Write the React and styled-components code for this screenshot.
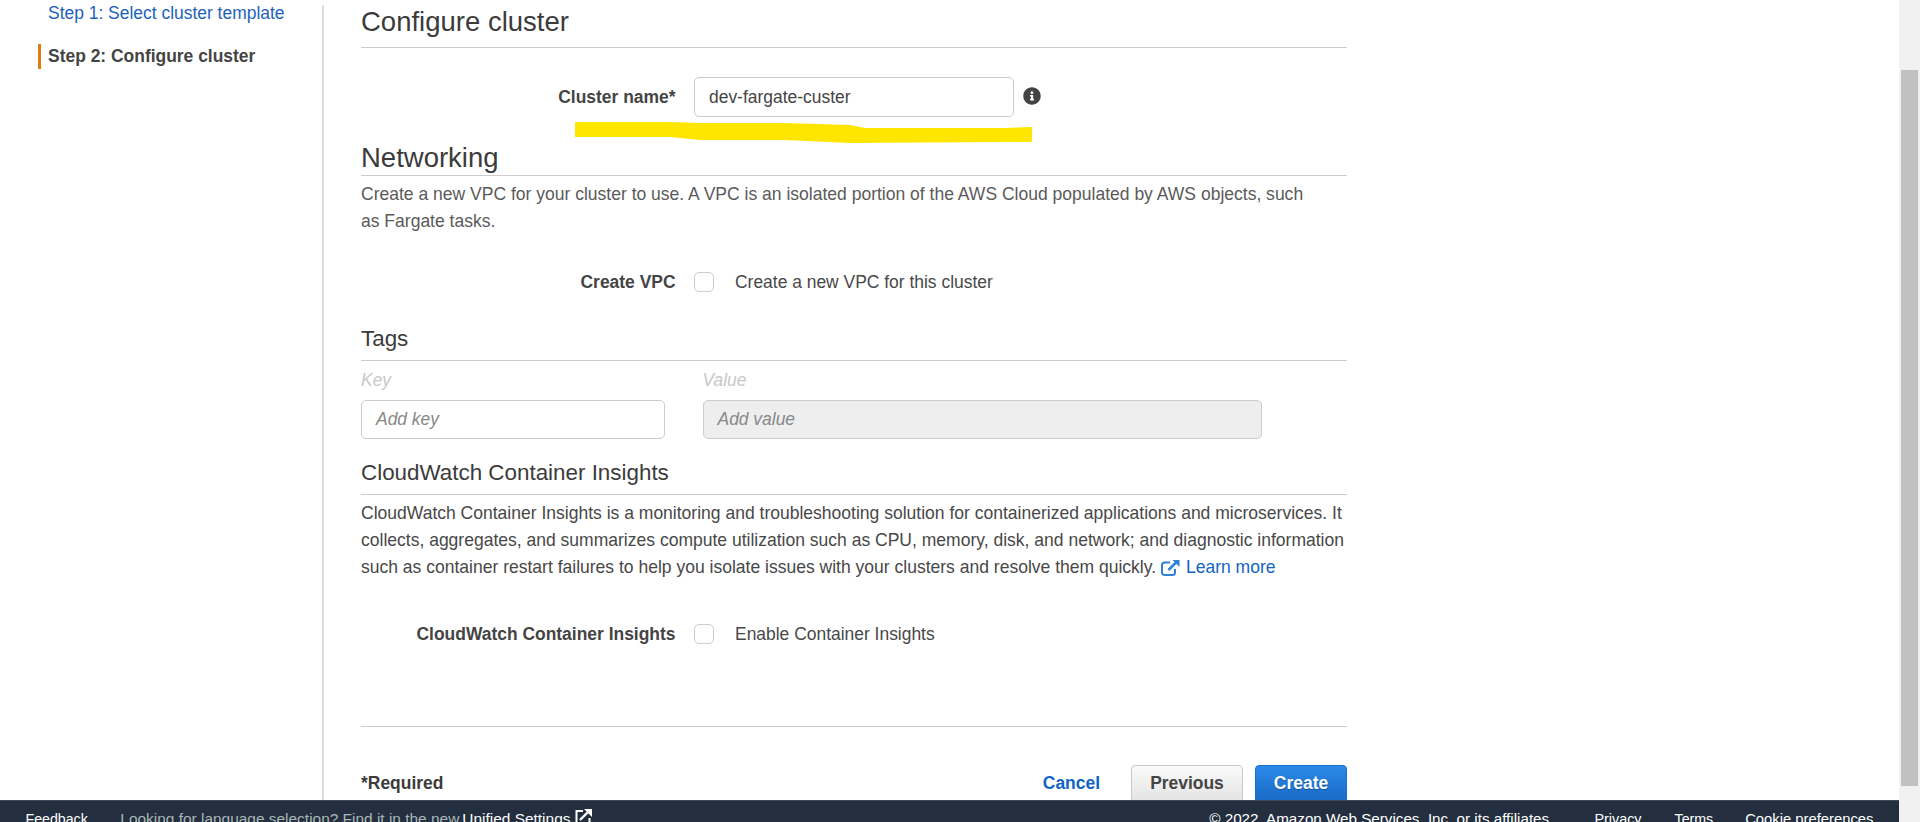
import React from "react";
import styled, { createGlobalStyle } from "styled-components";
import { FaInfoCircle } from "react-icons/fa";

const BODY = 17.45;

const Global = createGlobalStyle`
  html, body { margin: 0; padding: 0; height: 100%; overflow: hidden; background: #fff; }
  body { font-family: "Liberation Sans", Arial, sans-serif; color: #444; }
  * { box-sizing: border-box; }
`;

const Shell = styled.div`display: flex; width: 1920px; height: 822px; overflow: hidden;`;
const Page = styled.div`display: flex; flex-direction: column; width: 1899px; height: 822px;`;
const Content = styled.div`display: flex; flex: 0 0 800px; height: 800px; padding-top: 5px; overflow: hidden;`;
const Sidebar = styled.nav`flex: 0 0 324px; border-right: 2px solid #dedede; padding: 0 0 0 38px;`;
const StepLink = styled.a`
  display: block; height: 16px; line-height: 16px; padding-left: 10px; font-size: ${BODY}px; color: #1d62bd; white-space: nowrap;
`;
const ActiveStep = styled.div`
  margin-top: 23px; height: 25px; line-height: 24px; padding-left: 7px; font-size: ${BODY}px; font-weight: 700;
  color: #444; border-left: 3px solid #e07b12; white-space: nowrap;
`;
const Main = styled.main`position: relative; width: 986px; margin-left: 37px;`;
const Heading = styled.h2`
  margin: ${p => p.$top}px 0 0; height: ${p => p.$h}px; line-height: ${p => p.$lh}px; font-size: ${p => p.$size}px;
  font-weight: 400; color: #3b3b3b; border-bottom: 1px solid #ccc; white-space: nowrap;
`;
const Desc = styled.p`
  margin: ${p => p.$top}px 0 0; max-width: ${p => p.$max || 986}px; font-size: 17.52px; line-height: 27px; color: ${p => p.$color || "#484848"};
`;
const Row = styled.div`display: flex; align-items: center; margin-top: ${p => p.$top}px;`;
const Label = styled.label`
  flex: 0 0 314.5px; margin-right: 18.5px; text-align: right; line-height: 20px; font-size: ${BODY}px; font-weight: 700; color: #444; white-space: nowrap;
`;
const TextInput = styled.div`
  display: flex; align-items: center; width: ${p => p.$w}px; height: 40px; padding-left: 14px; border: 1px solid #ccc; border-radius: 5px;
  font-size: ${BODY}px; color: #444; background: #fff;
`;
const InfoIcon = styled(FaInfoCircle)`margin: 0 0 2px 9px; width: 18px; height: 18px; color: #444;`;
const Check = styled.span`flex: none; width: 20px; height: 20px; border: 1px solid #ccc; border-radius: 5px; background: #fff;`;
const CheckText = styled.span`margin-left: 21px; line-height: 20px; font-size: ${BODY}px; color: #484848;`;
const TagGrid = styled.div`display: grid; grid-template-columns: 303.5px 559.5px; column-gap: 38px; row-gap: 0; margin-top: 9px;`;
const TagLabel = styled.span`height: 30px; line-height: 20px; font-size: ${BODY}px; font-style: italic; color: #c8c8c8;`;
const TagInput = styled.div`
  display: flex; align-items: center; height: 39px; padding-left: 14px; border: 1px solid #ccc; border-radius: 5px;
  font-size: ${BODY}px; font-style: italic; color: #888; background: ${p => (p.$off ? "#eee" : "#fff")};
`;
const LearnLink = styled.a`color: #1463c2;`;
const ExtIcon = styled.svg`display: inline-block; width: 19px; height: 17px; margin: 0 6px 0 0; vertical-align: -3px;`;
const Rule = styled.hr`margin: ${p => p.$top}px 0 0; border: 0; border-top: 1px solid #ccc;`;
const Actions = styled.div`display: flex; align-items: flex-start; margin-top: 38px;`;
const Required = styled.span`flex: 1; line-height: 36px; font-size: ${BODY}px; font-weight: 700; color: #3b3b3b;`;
const Cancel = styled.a`margin-right: 31px; line-height: 36px; font-size: ${BODY}px; font-weight: 700; color: #0f63c3;`;
const Btn = styled.button`
  width: ${p => p.$w}px; height: 44px; padding: 0 0 8px; margin-left: ${p => p.$left}px; border-radius: 4px;
  font: 700 ${BODY}px "Liberation Sans", Arial, sans-serif;
  border: 1px solid ${p => (p.$primary ? "#1a6fc9" : "#c8c8c8")};
  color: ${p => (p.$primary ? "#fff" : "#444")};
  background: ${p => (p.$primary ? "linear-gradient(#2c89e8, #1565c0)" : "linear-gradient(#fafafa, #dfdfdf)")};
  text-shadow: ${p => (p.$primary ? "0 1px 1px rgba(0,0,0,.3)" : "none")};
`;
const Highlight = styled.svg`position: absolute; left: 214px; top: 117px; width: 457px; height: 21px;`;

const Footer = styled.footer`
  display: flex; flex: 0 0 22px; height: 22px; padding: 10px 25.5px 0; overflow: hidden; background: #232f3e;
  border-top: 1px solid #3d4a5a; line-height: 16px; color: #fff; white-space: nowrap;
`;
const FootItem = styled.span`
  margin-left: ${p => p.$left || 0}px; font-size: ${p => p.$size}px; color: ${p => p.$color || "#fff"};
`;
const FootIcon = styled.svg`flex: none; width: 17px; height: 16px; margin: -2px 0 0 5px;`;
const Spacer = styled.span`flex: 1;`;

const ScrollTrack = styled.div`flex: 0 0 21px; height: 822px; background: #f1f1f1; padding: 70px 2px 0;`;
const ScrollThumb = styled.div`height: 716px; background: #c1c1c1;`;

export default function App() {
  return (
    <Shell>
      <Global />
      <Page>
        <Content>
          <Sidebar>
            <StepLink>Step 1: Select cluster template</StepLink>
            <ActiveStep>Step 2: Configure cluster</ActiveStep>
          </Sidebar>
          <Main>
            <Heading $top={0} $h={43} $lh={34} $size={27.5}>Configure cluster</Heading>
            <Row $top={29}>
              <Label>Cluster name*</Label>
              <TextInput $w={320}>dev-fargate-custer</TextInput>
              <InfoIcon />
            </Row>
            <Highlight viewBox="0 0 457 21" preserveAspectRatio="none">
              <path d="M0 0 H95 L125 1 H210 L275 3 L290 6 H430 L457 5 V20 H430 L275 21 L210 18 L125 18 L95 15 H0 Z" fill="#ffe600" />
            </Highlight>
            <Heading $top={23} $h={36} $lh={36} $size={27.5}>Networking</Heading>
            <Desc $top={5} $color="#5a5a5a" $max={950}>Create a new VPC for your cluster to use. A VPC is an isolated portion of the AWS Cloud populated by AWS objects, such as Fargate tasks.</Desc>
            <Row $top={37}>
              <Label>Create VPC</Label>
              <Check />
              <CheckText>Create a new VPC for this cluster</CheckText>
            </Row>
            <Heading $top={26} $h={43} $lh={42} $size={22.4}>Tags</Heading>
            <TagGrid>
              <TagLabel>Key</TagLabel>
              <TagLabel>Value</TagLabel>
              <TagInput>Add key</TagInput>
              <TagInput $off>Add value</TagInput>
            </TagGrid>
            <Heading $top={13} $h={43} $lh={42} $size={22.4}>CloudWatch Container Insights</Heading>
            <Desc $top={5}>
              CloudWatch Container Insights is a monitoring and troubleshooting solution for containerized applications and microservices. It collects, aggregates, and summarizes compute utilization such as CPU, memory, disk, and network; and diagnostic information such as container restart failures to help you isolate issues with your clusters and resolve them quickly.{" "}
              <ExtIcon viewBox="0 0 19 17" fill="none" stroke="#2f80d8" strokeWidth="2">
                <path d="M9 3.5H3.5a2.5 2.5 0 0 0-2.5 2.5v7.5A2.5 2.5 0 0 0 3.5 16h8a2.5 2.5 0 0 0 2.5-2.5V10" />
                <path d="M7.5 11 15.5 3" strokeWidth="2.6" />
                <path d="M11.5 1H18.5V8Z" fill="#2f80d8" stroke="none" />
              </ExtIcon>
              <LearnLink>Learn more</LearnLink>
            </Desc>
            <Row $top={43}>
              <Label>CloudWatch Container Insights</Label>
              <Check />
              <CheckText>Enable Container Insights</CheckText>
            </Row>
            <Rule $top={82} />
            <Actions>
              <Required>*Required</Required>
              <Cancel>Cancel</Cancel>
              <Btn $w={112} $left={0}>Previous</Btn>
              <Btn $w={92} $left={12} $primary>Create</Btn>
            </Actions>
          </Main>
        </Content>
        <Footer>
          <FootItem $size={14.2}>Feedback</FootItem>
          <FootItem $size={15.45} $left={32.5} $color="#aab7b8">Looking for language selection? Find it in the new</FootItem>
          <FootItem $size={15.45} $left={3}>Unified Settings</FootItem>
          <FootIcon viewBox="0 0 17 16" fill="none" stroke="#fff" strokeWidth="2">
            <path d="M8 2H1.5V15H14.5V9" />
            <path d="M5 11 13 3" strokeWidth="2.4" />
            <path d="M9 0H17V8Z" fill="#fff" stroke="none" />
          </FootIcon>
          <Spacer />
          <FootItem $size={15.2}>© 2022, Amazon Web Services, Inc. or its affiliates.</FootItem>
          <FootItem $size={14.4} $left={41}>Privacy</FootItem>
          <FootItem $size={14.2} $left={33}>Terms</FootItem>
          <FootItem $size={14.8} $left={32}>Cookie preferences</FootItem>
        </Footer>
      </Page>
      <ScrollTrack><ScrollThumb /></ScrollTrack>
    </Shell>
  );
}
